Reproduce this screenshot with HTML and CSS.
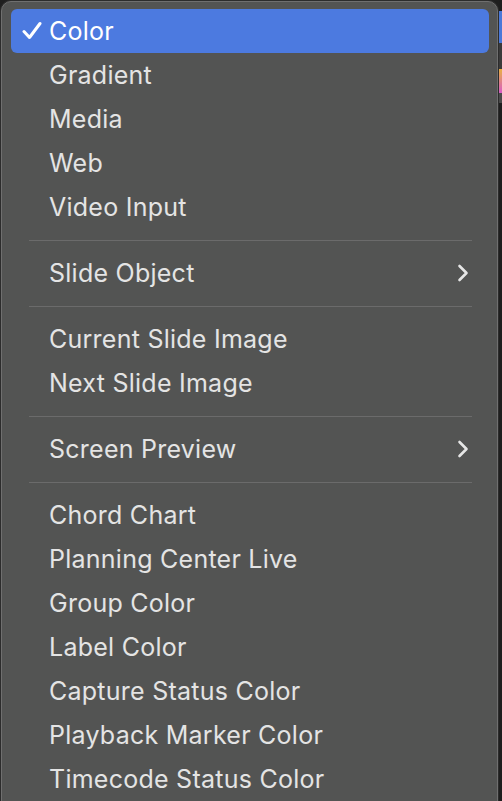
FILE: index.html
```html
<!DOCTYPE html>
<html>
<head>
<meta charset="utf-8">
<link rel="stylesheet" href="styles.css">
</head>
<body>
<div class="edge">
  <div class="edge-blue"></div>
  <div class="edge-gap"></div>
  <div class="edge-grad"></div>
  <div class="edge-gray"></div>
</div>
<div class="menu">
  <div class="item selected">
    <svg class="check" width="20" height="20" viewBox="0 0 20 20"><path d="M2 10.5 L7.5 16.5 L18 2.5" fill="none" stroke="#fff" stroke-width="3" stroke-linecap="round" stroke-linejoin="round"/></svg>
    <span>Color</span>
  </div>
  <div class="item"><span>Gradient</span></div>
  <div class="item"><span>Media</span></div>
  <div class="item"><span>Web</span></div>
  <div class="item"><span>Video Input</span></div>
  <div class="sep"></div>
  <div class="item"><span>Slide Object</span>
    <svg class="chev" width="12" height="18" viewBox="0 0 12 18"><path d="M2.5 2 L9.5 9 L2.5 16" fill="none" stroke="#e6e6e6" stroke-width="2.6" stroke-linecap="round" stroke-linejoin="round"/></svg>
  </div>
  <div class="sep"></div>
  <div class="item"><span>Current Slide Image</span></div>
  <div class="item"><span>Next Slide Image</span></div>
  <div class="sep"></div>
  <div class="item"><span>Screen Preview</span>
    <svg class="chev" width="12" height="18" viewBox="0 0 12 18"><path d="M2.5 2 L9.5 9 L2.5 16" fill="none" stroke="#e6e6e6" stroke-width="2.6" stroke-linecap="round" stroke-linejoin="round"/></svg>
  </div>
  <div class="sep"></div>
  <div class="item"><span>Chord Chart</span></div>
  <div class="item"><span>Planning Center Live</span></div>
  <div class="item"><span>Group Color</span></div>
  <div class="item"><span>Label Color</span></div>
  <div class="item"><span>Capture Status Color</span></div>
  <div class="item"><span>Playback Marker Color</span></div>
  <div class="item"><span>Timecode Status Color</span></div>
</div>
</body>
</html>
```
FILE: styles.css
```css
html, body {
  margin: 0;
  padding: 0;
  height: 801px;
  overflow: hidden;
  background: #1f1f1f;
}
body {
  position: relative;
  font-family: Inter, "Noto Sans", sans-serif;
}
.edge {
  position: absolute;
  left: 499px;
  top: 0;
  width: 3px;
  height: 801px;
  background: #1e1e1e;
}
.edge-blue {
  margin-top: 11px;
  height: 32px;
  background: #4a78d8;
}
.edge-gap {
  height: 26px;
  background: #3a3a3a;
}
.edge-grad {
  height: 24px;
  background: linear-gradient(#e8b040, #d85ac8);
}
.edge-gray {
  height: 10px;
  background: #4a4a4a;
}
.menu {
  position: absolute;
  left: 0;
  top: 0;
  width: 497px;
  height: 830px;
  box-sizing: border-box;
  background: #535453;
  border: 1px solid #6f6f6f;
  border-radius: 10px 10px 0 0;
  box-shadow: 0 0 0 1px #2c2c2c;
  margin: 1px 0 0 1px;
  padding: 7px 8px 0 9px;
  color: #e4e4e4;
  font-size: 25px;
}
.item {
  position: relative;
  height: 44px;
  display: flex;
  align-items: center;
  padding-left: 38px;
  border-radius: 6px;
}
.item span {
  line-height: 44px;
  letter-spacing: 0.25px;
}
.selected {
  background: #4c7ae0;
  color: #ffffff;
}
.check {
  position: absolute;
  left: 11px;
  top: 12px;
}
.chev {
  position: absolute;
  right: 20px;
  top: 13px;
}
.sep {
  height: 1px;
  margin: 11px 17px 10px 18px;
  background: #6b6b6b;
}
```
